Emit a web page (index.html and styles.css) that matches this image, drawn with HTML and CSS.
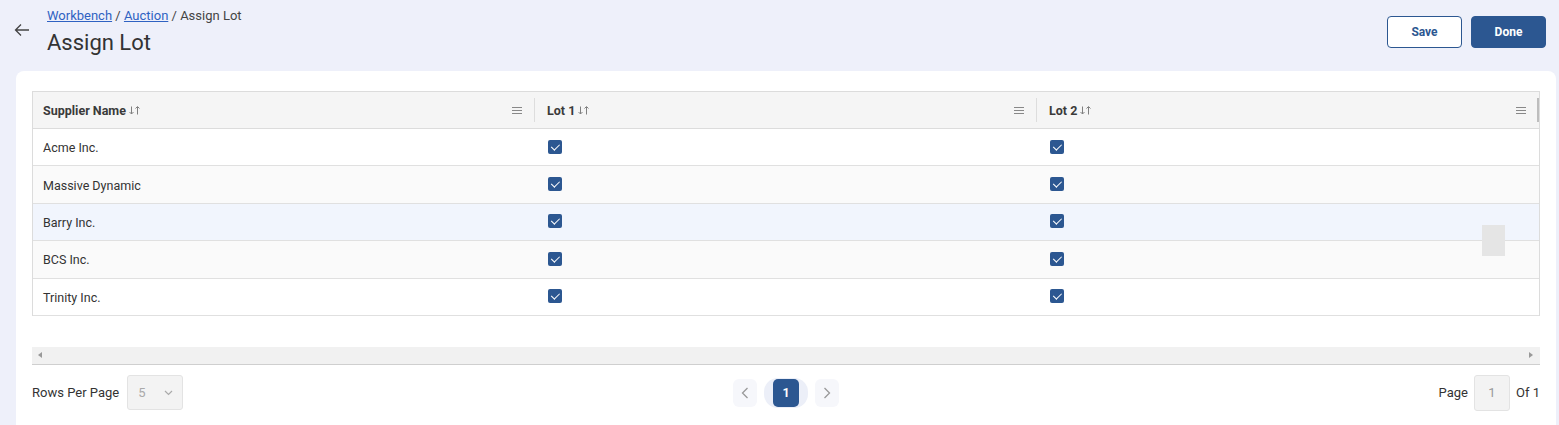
FILE: index.html
```html
<!DOCTYPE html>
<html lang="en">
<head>
<meta charset="utf-8">
<title>Assign Lot</title>
<link rel="stylesheet" href="styles.css">
</head>
<body>
<header class="topbar">
  <div class="title-group">
    <button class="back" aria-label="Back">
      <svg width="16" height="16" viewBox="0 0 16 16"><path d="M15 8H1.5M7 2.5L1.5 8 7 13.5" fill="none" stroke="#444" stroke-width="1.3"/></svg>
    </button>
    <div class="titles">
      <nav class="crumbs"><a href="#">Workbench</a> / <a href="#">Auction</a> / <span>Assign Lot</span></nav>
      <h1>Assign Lot</h1>
    </div>
  </div>
  <div class="actions">
    <button class="btn btn-outline">Save</button>
    <button class="btn btn-primary">Done</button>
  </div>
</header>

<main class="card">
  <div class="grid">
    <div class="row head">
      <div class="cell hcell"><span class="hlabel">Supplier Name <svg class="sort" width="11" height="9" viewBox="0 0 11 9"><path d="M2.5 0.5v7.5M0.5 6l2 2 2-2M8.5 8.5V1M6.5 2.5l2-2 2 2" fill="none" stroke="#808080" stroke-width="1"/></svg></span><span class="menu"></span></div>
      <div class="cell hcell"><span class="hlabel">Lot 1 <svg class="sort" width="11" height="9" viewBox="0 0 11 9"><path d="M2.5 0.5v7.5M0.5 6l2 2 2-2M8.5 8.5V1M6.5 2.5l2-2 2 2" fill="none" stroke="#808080" stroke-width="1"/></svg></span><span class="menu"></span></div>
      <div class="cell hcell last"><span class="hlabel">Lot 2 <svg class="sort" width="11" height="9" viewBox="0 0 11 9"><path d="M2.5 0.5v7.5M0.5 6l2 2 2-2M8.5 8.5V1M6.5 2.5l2-2 2 2" fill="none" stroke="#808080" stroke-width="1"/></svg></span><span class="menu"></span></div>
    </div>
    <div class="body">
      <div class="row r-white"><div class="cell">Acme Inc.</div><div class="cell"><span class="cb"></span></div><div class="cell"><span class="cb"></span></div></div>
      <div class="row r-gray"><div class="cell">Massive Dynamic</div><div class="cell"><span class="cb"></span></div><div class="cell"><span class="cb"></span></div></div>
      <div class="row r-hover"><div class="cell">Barry Inc.</div><div class="cell"><span class="cb"></span></div><div class="cell"><span class="cb"></span></div></div>
      <div class="row r-gray"><div class="cell">BCS Inc.</div><div class="cell"><span class="cb"></span></div><div class="cell"><span class="cb"></span></div></div>
      <div class="row r-white"><div class="cell">Trinity Inc.</div><div class="cell"><span class="cb"></span></div><div class="cell"><span class="cb"></span></div></div>
      <div class="ghost"></div>
    </div>
  </div>

  <div class="hscroll">
    <span class="arrow-left"></span>
    <span class="arrow-right"></span>
  </div>

  <footer class="pager">
    <div class="rpp">
      <span>Rows Per Page</span>
      <div class="select"><span>5</span><svg width="9" height="6" viewBox="0 0 9 6"><path d="M1 1l3.5 3.5L8 1" fill="none" stroke="#aaa" stroke-width="1.2"/></svg></div>
    </div>
    <div class="pages">
      <button class="pbtn"><svg width="8" height="12" viewBox="0 0 8 12"><path d="M6.5 1L1.5 6l5 5" fill="none" stroke="#999" stroke-width="1.3"/></svg></button>
      <div class="halo"><button class="pnum">1</button></div>
      <button class="pbtn"><svg width="8" height="12" viewBox="0 0 8 12"><path d="M1.5 1l5 5-5 5" fill="none" stroke="#999" stroke-width="1.3"/></svg></button>
    </div>
    <div class="pageof">
      <span>Page</span>
      <div class="pinput">1</div>
      <span>Of 1</span>
    </div>
  </footer>
</main>
</body>
</html>
```

FILE: styles.css
```css
* { box-sizing: border-box; }
html, body { margin: 0; }
body {
  background: #eef0fa;
  font-family: Roboto, "Liberation Sans", Arial, sans-serif;
  color: #333;
  overflow: hidden;
  height: 425px;
}
button { font-family: inherit; }

.topbar {
  display: flex;
  justify-content: space-between;
  align-items: flex-start;
  padding: 7px 13px 0 14px;
  height: 71px;
}
.title-group { display: flex; align-items: flex-start; }
.back {
  border: 0; background: none; padding: 0;
  margin: 15px 17px 0 0;
  width: 16px; height: 16px; display: flex;
}
.crumbs { font-size: 13px; line-height: 18px; color: #444; }
.crumbs a { color: #2f62c2; text-decoration: underline; }
h1 {
  margin: 5px 0 0;
  font-size: 22px;
  font-weight: 400;
  line-height: 26px;
  color: #333;
}
.actions { display: flex; gap: 9px; margin-top: 9px; }
.btn {
  width: 75px; height: 32px;
  border-radius: 4px;
  font-size: 12px;
  font-weight: 700;
  cursor: pointer;
}
.btn-outline { background: #fff; border: 1px solid #2c5791; color: #2c5791; }
.btn-primary { background: #2c5791; border: 1px solid #2c5791; color: #fff; }

.card {
  background: #fff;
  margin: 0 3px 0 16px;
  border-radius: 8px 8px 0 0;
  padding: 20px 16px 0 16px;
  height: 354px;
}

.grid { border: 1px solid #dcdcdc; border-bottom: 0; }
.row {
  display: grid;
  grid-template-columns: repeat(3, 1fr);
  height: 37.4px;
  border-bottom: 1.5px solid #e0e0e0;
}
.head { height: 38px; background: #f5f5f5; border-top: 1px solid #dcdcdc; margin-top: -1px; border-bottom: 1.5px solid #dcdcdc; }
.cell {
  display: flex;
  align-items: center;
  padding: 0 12px;
  font-size: 12.5px;
  color: #333;
}
.cell:first-child { padding-left: 10px; }
.body .cell { padding-top: 1px; }
.hcell { justify-content: space-between; position: relative; padding-right: 13px; }
.hcell::after {
  content: ""; position: absolute; right: 0; top: 6px; width: 1px; height: 24px; background: #ddd;
}
.hcell.last::after { width: 2px; background: #bdbdbd; right: 0; }
.hlabel { font-weight: 700; color: #3a3a3a; font-size: 12.5px; display: flex; align-items: center; gap: 3px; }
.sort { display: block; margin-top: 1px; }
.menu {
  width: 10px; height: 7px;
  border-top: 1px solid #888; border-bottom: 1px solid #888;
  position: relative;
}
.menu::before { content: ""; position: absolute; left: 0; right: 0; top: 2px; height: 1px; background: #888; }

.body { position: relative; }
.r-white { background: #fff; }
.r-gray { background: #fafafa; }
.r-hover { background: #f1f5fd; }
.cb {
  width: 14px; height: 14px;
  border-radius: 2px;
  background: #2c5791;
  position: relative;
  margin-left: 1px;
  margin-top: -2px;
}
.cb::after {
  content: ""; position: absolute;
  left: 4.5px; top: 2px; width: 3.5px; height: 7px;
  border: solid #fff; border-width: 0 1.6px 1.6px 0;
  transform: rotate(45deg);
}
.ghost {
  position: absolute; left: 1449px; top: 96px;
  width: 23px; height: 31px; background: #e5e5e5;
}

.hscroll {
  margin-top: 31px;
  height: 18px;
  background: #f1f1f1;
  border-bottom: 1px solid #cfcfcf;
  position: relative;
}
.arrow-left, .arrow-right { position: absolute; top: 5px; width: 0; height: 0; border-top: 3.5px solid transparent; border-bottom: 3.5px solid transparent; }
.arrow-left { left: 6px; border-right: 4px solid #999; }
.arrow-right { right: 7px; border-left: 4px solid #999; }

.pager {
  display: flex;
  justify-content: space-between;
  align-items: center;
  margin-top: 10px;
  height: 36px;
}
.rpp, .pageof { display: flex; align-items: center; font-size: 13px; color: #333; }
.rpp { gap: 8px; width: 300px; }
.pageof { gap: 6px; width: 300px; justify-content: flex-end; }
.select {
  width: 56px; height: 35px;
  background: #f3f3f3; border: 1px solid #e3e3e3; border-radius: 3px;
  display: flex; align-items: center; justify-content: space-between;
  padding: 0 9px 0 10px; color: #aaa; font-size: 13px;
}
.pages { display: flex; align-items: center; gap: 7px; margin-left: 0; }
.pbtn {
  width: 24px; height: 28px; border: 0; background: #f6f7fb; border-radius: 6px;
  display: flex; align-items: center; justify-content: center; padding: 0;
}
.halo { padding: 0 9px; background: #eceff8; border-radius: 14px; height: 30px; display: flex; align-items: center; }
.pnum {
  width: 26px; height: 28px; border: 0; border-radius: 5px;
  background: #2c5791; color: #fff; font-size: 12.5px; font-weight: 700; padding: 0;
}
.pinput {
  width: 36px; height: 36px;
  background: #f3f3f3; border: 1px solid #e3e3e3; border-radius: 3px;
  display: flex; align-items: center; justify-content: center; color: #999;
}
```
